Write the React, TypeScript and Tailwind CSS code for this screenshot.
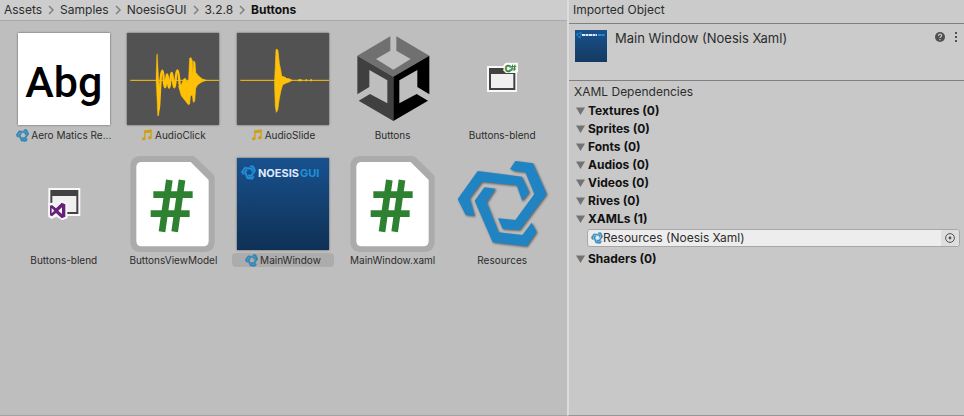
import type { ReactNode } from "react";

const LOGO_PATHS = [
  "M511 33L564 40L605 132L524 240L473 237L459 205L511 210L568 132L541 67L509 63L495 57Z",
  "M398 63L531 80L553 127L532 153L515 106L411 95L374 145L389 197L362 195L338 147Z",
  "M418 112L452 116L425 157L461 247L532 255L560 218L575 246L545 289L443 277L389 152Z",
];

function NoesisLogo({ className, fill = "#2184c2", weight = 0 }: { className: string; fill?: string; weight?: number }) {
  return (
    <svg viewBox="333 24 276 276" className={className} fill={fill} stroke={fill} strokeWidth={weight} aria-hidden="true">
      {LOGO_PATHS.map((d) => (
        <path key={d} d={d} />
      ))}
    </svg>
  );
}

function NoteIcon() {
  return (
    <svg viewBox="0 0 12 12" className="size-3 shrink-0" fill="#d0a010" aria-hidden="true">
      <path d="M3.2 1.6L10.6 0.6V8.6H9.3V3.4L4.5 4V9.6H3.2Z" />
      <path d="M3.2 1.6L10.6 0.6V3L3.2 4Z" />
      <ellipse cx="2.7" cy="9.8" rx="1.9" ry="1.5" />
      <ellipse cx="8.8" cy="8.8" rx="1.9" ry="1.5" />
    </svg>
  );
}

function FontThumb() {
  return (
    <span className="flex size-full items-center justify-center bg-white pt-1.5 font-[family-name:Roboto,sans-serif] text-[43px] leading-none font-medium text-black shadow-[0_0_2px_#555]">
      Abg
    </span>
  );
}

function AudioThumb({ children }: { children: ReactNode }) {
  return (
    <svg
      viewBox="0 0 276 276"
      className="size-full bg-[#525252] shadow-[0_0_2px_#555]"
      fill="#ffc107"
      stroke="#ffc107"
      strokeLinejoin="round"
      aria-hidden="true"
    >
      <path d="M10 142H276" strokeWidth="3" fill="none" />
      {children}
    </svg>
  );
}

function ClickThumb() {
  return (
    <AudioThumb>
      <path d="M87 142L89 66L91 62L94 120L97 170L99 215L95 248L92 248L90 200Z" strokeWidth="1" />
      <path
        d="M95 230C99 195 100 113 106 113C111 113 109 163 114 163C119 163 116 124 120 124C125 124 122 164 126 164C131 164 129 120 134 120C139 120 137 163 142 163C147 163 145 112 151 112C157 112 155 150 161 170"
        strokeWidth="7"
        fill="none"
      />
      <path
        d="M155 160L163 156L170 138L175 136L180 148L185 140L188 76L192 74L196 84L197 128L200 84L204 88L206 118L212 126L218 132L226 138L238 142L226 146L216 152L210 158L206 166L203 205L199 208L196 185L190 190L188 213L184 215L176 205L163 188Z"
        strokeWidth="2"
      />
    </AudioThumb>
  );
}

function SlideThumb() {
  return (
    <AudioThumb>
      <path
        d="M113 142L115 100L117 50L120 48L123 54L127 92L131 110L134 130L143 132L148 136L156 137L166 142L156 147L146 151L137 155L132 172L127 196L122 232L118 238L115 220L113 160Z"
        strokeWidth="2"
      />
      <path d="M184 142h10M206 142h4M220 142h5" strokeWidth="6" />
    </AudioThumb>
  );
}

function UnityThumb() {
  return (
    <svg viewBox="5 24 276 276" className="size-full" aria-hidden="true">
      <path fill="#707070" d="M135 34V77L92 102L144 134L196 102L153 77V34L252 92L144 155L36 92Z" />
      <path fill="#404040" d="M36 92L144 155V288L40 227L74 207L126 235V166L72 135V186L36 208Z" />
      <path fill="#000" d="M252 92V208L216 186V135L162 166V235L214 207L248 227L144 288V155Z" />
    </svg>
  );
}

function CsProjectThumb() {
  return (
    <svg viewBox="333 24 276 276" className="size-full" aria-hidden="true">
      <path fill="#f8f8f8" d="M426 123H474L482 114H519V138L516 144V201H426Z" />
      <path fill="#424242" d="M432 129H511V195H432Z" />
      <path fill="#f0f0f0" d="M438 147H505V189H438Z" />
      <path fill="#f8f8f8" d="M477 118L484 113H519V139L514 144H482L475 136Z" />
      <text x="479" y="140" fill="#2f8132" stroke="#2f8132" fontSize="27" fontWeight="700" className="font-['Inter',sans-serif]">
        C
      </text>
      <path d="M503 119L500 138M510 119L507 138M498 125H514M497 132H513" stroke="#2f8132" strokeWidth="3" />
    </svg>
  );
}

function SolutionThumb() {
  return (
    <svg viewBox="53 24 276 276" className="size-full" aria-hidden="true">
      <path fill="#f8f8f8" d="M144 114H240V198H201V204L186 210L168 200L154 206L144 200Z" />
      <path fill="#424242" d="M150 120H234V192H150Z" />
      <path fill="#f0f0f0" d="M156 138H228V186H156Z" />
      <path fill="#f8f8f8" d="M144 160L156 158L168 168L183 153L201 161V204L186 210L168 198L154 206L144 200Z" />
      <path
        fill="#68217a"
        fillRule="evenodd"
        d="M184 158L195 163V200L184 205L167 189L155 199L149 196V167L155 165L167 175ZM185 172L174 182L185 192ZM154 174V190L162 182Z"
      />
    </svg>
  );
}

function ScriptThumb() {
  return (
    <svg viewBox="382 24 276 276" className="size-full overflow-visible" aria-hidden="true">
      <path
        fill="#ababab"
        d="M424 18H578Q584 18 589 23L640 73Q645 78 645 85V274Q645 306 613 306H424Q392 306 392 274V50Q392 18 424 18Z"
      />
      <path fill="#fff" d="M426 36H573L627 90V273Q627 289 611 289H426Q410 289 410 273V52Q410 36 426 36Z" />
      <path d="M509 90L487 245M547 90L525 245M461 134H579M453 191H570" stroke="#2f8132" strokeWidth="20" fill="none" />
    </svg>
  );
}

function WindowThumb() {
  return (
    <span className="flex size-full items-start bg-linear-to-b from-[#18518e] to-[#0f3156] pt-[7px] pl-1 font-[family-name:Inter,sans-serif] text-[11px] leading-4 font-bold whitespace-nowrap shadow-[0_0_2px_#555]">
      <NoesisLogo className="mr-0.5 size-[15px] shrink-0" fill="#2290d8" weight={8} />
      <span className="text-[#dfe8ff]">NOESIS</span>
      <span className="ml-px text-[#2290d8]">GUI</span>
    </span>
  );
}

function LogoThumb() {
  return <NoesisLogo className="size-full overflow-visible drop-shadow-[1px_1px_1px_rgba(0,0,0,0.5)]" />;
}

const smallLogo = <NoesisLogo className="size-[13px] shrink-0" fill="#2f86b8" weight={12} />;

const assets: { name: string; thumb: ReactNode; icon?: ReactNode; selected?: boolean }[] = [
  { name: "Aero Matics Re...", thumb: <FontThumb />, icon: smallLogo },
  { name: "AudioClick", thumb: <ClickThumb />, icon: <NoteIcon /> },
  { name: "AudioSlide", thumb: <SlideThumb />, icon: <NoteIcon /> },
  { name: "Buttons", thumb: <UnityThumb /> },
  { name: "Buttons-blend", thumb: <CsProjectThumb /> },
  { name: "Buttons-blend", thumb: <SolutionThumb /> },
  { name: "ButtonsViewModel", thumb: <ScriptThumb /> },
  { name: "MainWindow", thumb: <WindowThumb />, icon: smallLogo, selected: true },
  { name: "MainWindow.xaml", thumb: <ScriptThumb /> },
  { name: "Resources", thumb: <LogoThumb /> },
];

const folders = ["Assets", "Samples", "NoesisGUI", "3.2.8"];

function Breadcrumb() {
  return (
    <nav className="flex h-[21px] items-center border-b border-[#a9a9a9] bg-[#cdcdcd] px-1 text-xs">
      {folders.map((name) => (
        <span key={name} className="flex items-center">
          <button type="button">{name}</button>
          <svg viewBox="0 0 18 10" className="h-2.5 w-[18px]" fill="none" stroke="#808080" strokeWidth="1.5" aria-hidden="true">
            <path d="M7 1L11 5L7 9" />
          </svg>
        </span>
      ))}
      <button type="button" className="font-bold text-[#111]">
        Buttons
      </button>
    </nav>
  );
}

function AssetBrowser() {
  return (
    <section className="flex flex-col border-b border-[#a3a3a3] bg-[#bebebe]">
      <Breadcrumb />
      <div className="grid grid-cols-5 gap-y-4 pt-3 pr-2.5 pl-[9px]">
        {assets.map(({ name, thumb, icon, selected }, index) => (
          <button key={index} type="button" className="flex flex-col items-center">
            <span className="block size-[92px]">{thumb}</span>
            <span
              className={
                "mt-[3px] flex h-3.5 w-[102px] items-center justify-center rounded-sm text-[10px] leading-3.5 whitespace-nowrap " +
                (selected ? "bg-[#acacac]" : "")
              }
            >
              {icon}
              <span className={icon ? "ml-0.5" : ""}>{name}</span>
            </span>
          </button>
        ))}
      </div>
    </section>
  );
}

function Foldout({ label, children }: { label: string; children?: ReactNode }) {
  return (
    <div>
      <button type="button" aria-expanded="true" className="flex h-[18px] items-center gap-[3px] pl-[7px] text-[12px] font-bold text-[#111]">
        <svg viewBox="0 0 9 8" className="h-2 w-[9px]" fill="#727272" aria-hidden="true">
          <path d="M0 0.5H9L4.5 8Z" />
        </svg>
        {label}
      </button>
      {children}
    </div>
  );
}

function ObjectField() {
  return (
    <div className="mt-px mr-1 mb-[3px] ml-[18px] flex h-[18px] items-center rounded-[3px] border border-[#a8a8a8] bg-[#ededed] pl-[3px]">
      <NoesisLogo className="size-3 shrink-0" fill="#3a8fc0" weight={10} />
      <input
        type="text"
        readOnly
        aria-label="XAML reference"
        defaultValue="Resources (Noesis Xaml)"
        className="h-4 min-w-0 flex-1 bg-transparent text-xs outline-none"
      />
      <button type="button" aria-label="Select object" className="flex h-full w-[18px] items-center justify-center rounded-r-sm bg-[#dedede]">
        <svg viewBox="0 0 10 10" className="size-2.5" fill="none" stroke="#505050" aria-hidden="true">
          <circle cx="5" cy="5" r="4.4" />
          <circle cx="5" cy="5" r="1.4" fill="#505050" stroke="none" />
        </svg>
      </button>
    </div>
  );
}

function Inspector() {
  return (
    <section className="flex flex-col border-b border-l-2 border-b-[#969696] border-l-[#dcdcdc] bg-[#c8c8c8]">
      <h2 className="h-6 border-b border-[#7f7f7f] bg-[#cbcbcb] pl-1 text-xs leading-5">Imported Object</h2>
      <header className="flex h-[57px] items-start border-b border-[#7f7f7f] bg-[#cbcbcb] pt-1.5 pr-[5px] pl-1.5">
        <span className="flex size-8 items-start bg-linear-to-b from-[#18518e] to-[#153a60] pt-0.5 pl-px">
          <NoesisLogo className="size-1.5" fill="#2290d8" />
          <svg viewBox="0 0 24 6" className="h-1.5 w-6" fill="none" strokeWidth="2" aria-hidden="true">
            <path d="M0 3H15" stroke="#dfe8ff" strokeDasharray="3 0.5" />
            <path d="M16 3H23" stroke="#2290d8" strokeDasharray="3 0.5" />
          </svg>
        </span>
        <h1 className="ml-2 flex-1 text-[13px] leading-4">Main Window (Noesis Xaml)</h1>
        <button type="button" aria-label="Help" className="mt-0.5">
          <svg viewBox="0 0 10 10" className="size-2.5" aria-hidden="true">
            <circle cx="5" cy="5" r="5" fill="#4f4f4f" />
            <path d="M3.4 4C3.4 1.6 6.7 1.7 6.6 3.7C6.5 4.8 5 4.7 5 6M5 7V8.2" fill="none" stroke="#cbcbcb" strokeWidth="1.2" />
          </svg>
        </button>
        <button type="button" aria-label="More options" className="mt-0.5 ml-2">
          <svg viewBox="0 0 6 10" className="h-2.5 w-1.5" fill="#505050" aria-hidden="true">
            <path d="M2 0h2v2h-2zM2 4h2v2h-2zM2 8h2v2h-2z" />
          </svg>
        </button>
      </header>
      <h3 className="h-[21px] pl-[5px] text-xs leading-[22px]">XAML Dependencies</h3>
      <Foldout label="Textures (0)" />
      <Foldout label="Sprites (0)" />
      <Foldout label="Fonts (0)" />
      <Foldout label="Audios (0)" />
      <Foldout label="Videos (0)" />
      <Foldout label="Rives (0)" />
      <Foldout label="XAMLs (1)">
        <ObjectField />
      </Foldout>
      <Foldout label="Shaders (0)" />
    </section>
  );
}

export default function App() {
  return (
    <main className="grid min-h-screen grid-cols-[567fr_397fr] font-['Inter',sans-serif] text-[#2c2c2c]">
      <AssetBrowser />
      <Inspector />
    </main>
  );
}
